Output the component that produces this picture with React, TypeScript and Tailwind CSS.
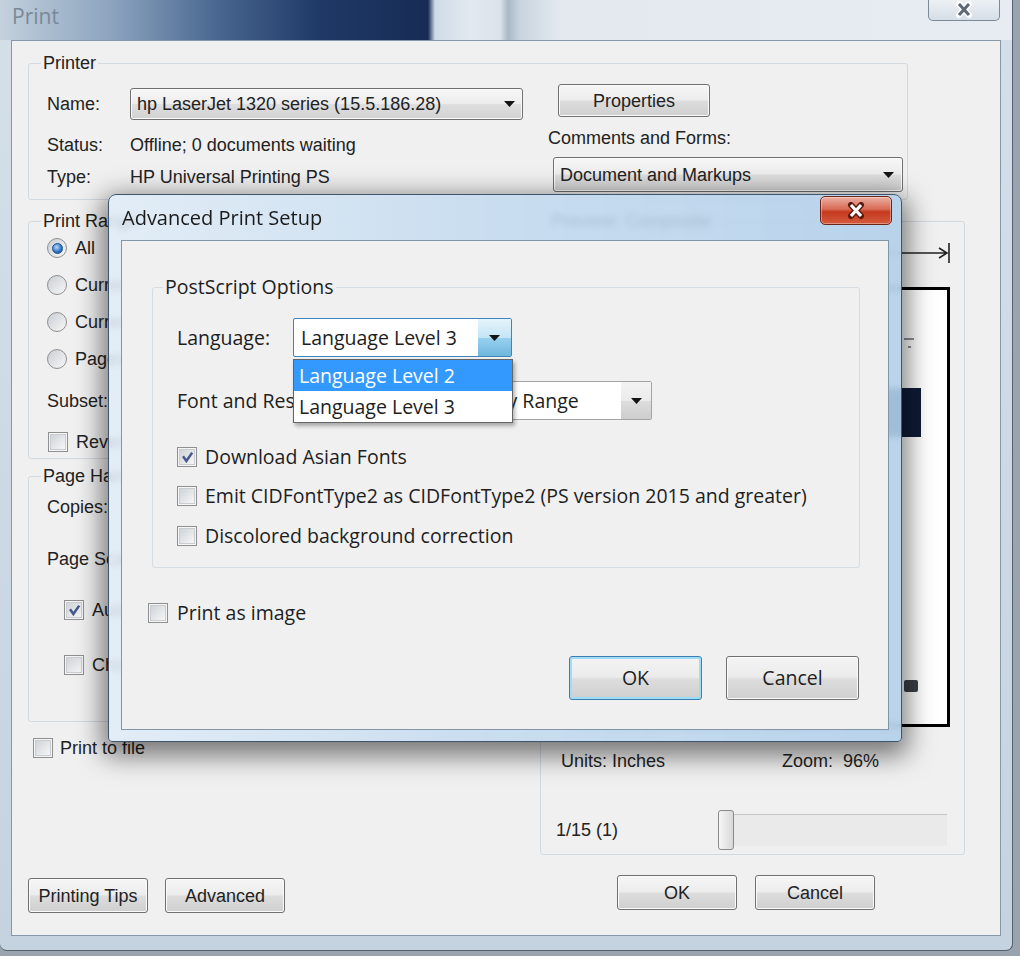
import React from "react";

const ui = "font-['Open_Sans','Noto_Sans',sans-serif]";

const btn =
  "flex items-center justify-center rounded-[3px] border border-[#707070] bg-[linear-gradient(#f6f6f6,#ececec_48%,#dddddd_52%,#cfcfcf)] shadow-[inset_0_0_0_1px_#fbfbfb]";

const combo =
  "flex items-center justify-between rounded-[3px] border border-[#707070] bg-[linear-gradient(#f7f7f7,#ededed_48%,#dedede_52%,#d2d2d2)] shadow-[inset_0_0_0_1px_#fbfbfb]";

const group = "rounded-[3px] border border-[#d2d9df]";

function Caret() {
  return (
    <svg width="11" height="6" viewBox="0 0 11 6" className="shrink-0">
      <path d="M0 0h11L5.5 6z" fill="#141414" />
    </svg>
  );
}

function Check({ on = false }: { on?: boolean }) {
  return (
    <span className="flex h-[20px] w-[20px] shrink-0 items-center justify-center border border-[#8f8f8f] bg-[#f5f5f5]">
      <span className="flex h-[16px] w-[16px] items-center justify-center border border-[#c9ccd1] bg-[linear-gradient(135deg,#cfd3d8,#f6f6f6)]">
        {on && (
          <svg width="13" height="12" viewBox="0 0 13 12">
            <path d="M2 5.2 5.4 10 11.2 1.6" fill="none" stroke="#45598e" strokeWidth="2.5" />
          </svg>
        )}
      </span>
    </span>
  );
}

function Radio({ on = false }: { on?: boolean }) {
  return (
    <span className="flex h-[20px] w-[20px] shrink-0 items-center justify-center rounded-full border border-[#8f8f8f] bg-[linear-gradient(135deg,#c9ced4,#f7f7f7)]">
      {on && (
        <span className="h-[11px] w-[11px] rounded-full border border-[#1b4f8c] bg-[radial-gradient(circle_at_40%_35%,#b4dcff,#2d72c0_60%,#1a4b8a)]" />
      )}
    </span>
  );
}

export default function App() {
  return (
    <div className="relative h-[956px] w-[1020px] overflow-hidden bg-[#9aa4ae] font-['Liberation_Sans',Arial,sans-serif] text-[18px] leading-[22px] text-[#222]">
      {/* Print window */}
      <div className="flex h-[951px] w-[1013px] flex-col rounded-b-[7px] border-r border-b border-[#56616d] bg-[linear-gradient(180deg,#d4dfe9,#c5d3e1)]">
        <div className="flex h-[40px] shrink-0 items-start justify-between bg-[linear-gradient(90deg,#c5d2de_0px,#aebfd1_40px,#8ea5c0_110px,#47658f_220px,#1f3966_320px,#172c55_428px,#cfdbe6_435px,#e2e9f0_470px,#dbe3eb_500px,#aab8c6_508px,#c9d4df_520px,#e3e9ef_560px,#e6ecf1_100%)]">
          <span className={`${ui} ml-[12px] mt-[3px] text-[21px] leading-[26px] text-[#7a8998]`}>Print</span>
          <div className="mr-[12px] flex h-[21px] w-[72px] items-center justify-center rounded-b-[5px] border border-t-0 border-[#7c8a98] bg-[linear-gradient(#edf1f5,#d5dee7)]">
            <svg width="24" height="18" viewBox="0 0 24 18">
              <path d="M7 3l10 11M17 3 7 14" stroke="#fff" strokeWidth="6" strokeLinecap="round" />
              <path d="M7 3l10 11M17 3 7 14" stroke="#5d6875" strokeWidth="3" />
            </svg>
          </div>
        </div>

        <div className="flex flex-1 px-[11px] pb-[14px]">
          <div className="flex flex-1 flex-col border border-[#8797a8] bg-[#f0f0f0]">
            {/* Printer */}
            <fieldset className={`${group} ml-[16px] mt-[11px] w-[880px] pb-[7px] pl-[12px]`}>
              <legend className="px-[2px]">Printer</legend>
              <div className="mt-[10px] flex">
                <div className="flex w-[482px] flex-col">
                  <div className="mt-[4px] flex h-[32px] items-center">
                    <span className="w-[89px] pl-[6px]">Name:</span>
                    <div className={`${combo} h-[32px] w-[393px] pl-[6px] pr-[7px]`}>
                      <span>hp LaserJet 1320 series (15.5.186.28)</span>
                      <Caret />
                    </div>
                  </div>
                  <div className="mt-[13px] flex h-[24px] items-center">
                    <span className="w-[89px] pl-[6px]">Status:</span>
                    <span>Offline; 0 documents waiting</span>
                  </div>
                  <div className="mt-[8px] flex h-[24px] items-center">
                    <span className="w-[89px] pl-[6px]">Type:</span>
                    <span>HP Universal Printing PS</span>
                  </div>
                </div>
                <div className="ml-[25px] flex flex-col">
                  <div className={`${btn} ml-[10px] h-[33px] w-[152px]`}>Properties</div>
                  <span className="mt-[9px] h-[24px] leading-[24px]">Comments and Forms:</span>
                  <div className={`${combo} ml-[5px] mt-[7px] h-[35px] w-[350px] pl-[6px] pr-[8px]`}>
                    <span>Document and Markups</span>
                    <Caret />
                  </div>
                </div>
              </div>
            </fieldset>

            <div className="mt-[10px] flex items-start">
              {/* left column */}
              <div className="ml-[16px] flex w-[505px] flex-col whitespace-nowrap">
                <fieldset className={`${group} pb-[3px] pl-[12px]`}>
                  <legend className="px-[2px]">Print Range</legend>
                  <div className="mt-[3px] flex h-[26px] items-center gap-[8px] pl-[6px]">
                    <Radio on />
                    <span>All</span>
                  </div>
                  <div className="mt-[11px] flex h-[26px] items-center gap-[8px] pl-[6px]">
                    <Radio />
                    <span>Current view</span>
                  </div>
                  <div className="mt-[11px] flex h-[26px] items-center gap-[8px] pl-[6px]">
                    <Radio />
                    <span>Current page</span>
                  </div>
                  <div className="mt-[11px] flex h-[26px] items-center gap-[8px] pl-[6px]">
                    <Radio />
                    <span>Pages</span>
                  </div>
                  <div className="mt-[16px] flex h-[26px] items-center pl-[6px]">
                    <span>Subset:</span>
                  </div>
                  <div className="mt-[15px] flex h-[26px] items-center gap-[8px] pl-[7px]">
                    <Check />
                    <span>Reverse pages</span>
                  </div>
                </fieldset>

                <fieldset className={`${group} mt-[6px] pb-[43px] pl-[12px]`}>
                  <legend className="px-[2px]">Page Handling</legend>
                  <div className="mt-[7px] flex h-[26px] items-center pl-[6px]">
                    <span>Copies:</span>
                  </div>
                  <div className="mt-[26px] flex h-[26px] items-center pl-[6px]">
                    <span>Page Scaling:</span>
                  </div>
                  <div className="mt-[25px] flex h-[26px] items-center gap-[8px] pl-[23px]">
                    <Check on />
                    <span>Auto-Rotate and Center</span>
                  </div>
                  <div className="mt-[29px] flex h-[26px] items-center gap-[8px] pl-[23px]">
                    <Check />
                    <span>Choose paper source by PDF page size</span>
                  </div>
                </fieldset>

                <div className="mt-[13px] flex h-[26px] items-center gap-[7px] pl-[5px]">
                  <Check />
                  <span>Print to file</span>
                </div>
              </div>

              {/* preview */}
              <fieldset className={`${group} ml-[7px] w-[425px] pb-[4px] pl-[8px]`}>
                <legend className="px-[2px]">Preview: Composite</legend>
                <div className="mt-[11px] flex h-[20px] justify-end pr-[14px]">
                  <svg width="380" height="20" viewBox="0 0 380 20">
                    <path d="M0 10H377M369 5l8 5-8 5M379 0v20" stroke="#222" strokeWidth="1.6" fill="none" />
                  </svg>
                </div>
                <div className="relative ml-[26px] mt-[24px] h-[440px] w-[375px] border-[3px] border-black bg-white">
                  <div className="absolute left-[300px] top-[98px] h-[49px] w-[43px] bg-[#0f1b36]" />
                  <div className="absolute left-[326px] top-[48px] h-[2px] w-[10px] bg-[#8a929c]" />
                  <div className="absolute left-[330px] top-[56px] h-[2px] w-[3px] bg-[#8a929c]" />
                  <div className="absolute left-[326px] top-[390px] h-[12px] w-[14px] rounded-[2px] bg-[#3a3f47]" />
                </div>
                <div className="mt-[22px] flex h-[24px] items-center pl-[12px]">
                  <span className="w-[221px]">Units: Inches</span>
                  <span>Zoom:&nbsp; 96%</span>
                </div>
                <div className="mt-[37px] flex h-[40px] items-center pl-[7px]">
                  <span className="w-[162px]">1/15 (1)</span>
                  <div className="relative h-[40px] w-[229px]">
                    <div className="absolute left-[2px] top-[4px] h-[32px] w-[227px] border-t border-[#c4c4c4] bg-[#eaeaea]" />
                    <div className="absolute left-0 top-0 h-[40px] w-[16px] rounded-[3px] border border-[#8a8a8a] bg-[linear-gradient(90deg,#f6f6f6,#d8d8d8)]" />
                  </div>
                </div>
              </fieldset>
            </div>

            <div className="mt-[20px] flex items-start">
              <div className={`${btn} ml-[16px] mt-[3px] h-[35px] w-[120px]`}>Printing Tips</div>
              <div className={`${btn} ml-[17px] mt-[3px] h-[35px] w-[120px]`}>Advanced</div>
              <div className={`${btn} ml-[332px] h-[35px] w-[120px]`}>OK</div>
              <div className={`${btn} ml-[18px] h-[35px] w-[120px]`}>Cancel</div>
            </div>
          </div>
        </div>
      </div>

      {/* Advanced Print Setup modal */}
      <div
        className={`${ui} absolute left-[108px] top-[194px] flex h-[548px] w-[794px] flex-col rounded-t-[8px] rounded-b-[4px] border border-[#40556b] bg-[linear-gradient(90deg,rgba(224,236,247,0.86),rgba(196,219,240,0.86)_45%,rgba(178,207,234,0.9))] text-[19.5px] leading-[24px] text-[#1e1e1e] shadow-[0_8px_26px_6px_rgba(0,0,0,0.5)] backdrop-blur-[3px]`}
      >
        <div className="flex h-[45px] shrink-0 items-start justify-between">
          <span className="ml-[13px] mt-[11px] text-[20px] leading-[24px] text-[#1b1b1b]">Advanced Print Setup</span>
          <div className="mr-[9px] mt-[1px] flex h-[29px] w-[72px] items-center justify-center rounded-[5px] border border-[#6b2519] bg-[linear-gradient(#eab0a2,#d86a55_45%,#c4391f_55%,#d65a3c)] shadow-[inset_0_0_0_1px_rgba(255,255,255,0.35)]">
            <svg width="22" height="18" viewBox="0 0 22 18">
              <path d="M6 3l10 11M16 3 6 14" stroke="#5a1a10" strokeWidth="6" strokeLinecap="round" />
              <path d="M6 3l10 11M16 3 6 14" stroke="#fff" strokeWidth="3.2" />
            </svg>
          </div>
        </div>

        <div className="mx-[12px] mb-[11px] flex flex-1 flex-col border border-[#8296aa] bg-[#f0f0f0]">
          <fieldset className="ml-[30px] mt-[34px] w-[708px] rounded-[3px] border border-[#d5dde3] pb-[19px] pl-[10px]">
            <legend className="px-[2px]">PostScript Options</legend>

            <div className="mt-[19px] flex h-[39px] items-center pl-[14px]">
              <span className="w-[116px]">Language:</span>
              <div className="relative h-[39px] w-[219px]">
                <div className="flex h-full items-stretch rounded-[2px] border border-[#3f84bd] bg-white">
                  <span className="flex flex-1 items-center pl-[7px]">Language Level 3</span>
                  <span className="flex w-[33px] items-center justify-center bg-[linear-gradient(#e5f4fc,#c4e5f6_50%,#98d1ef_51%,#6fb6dd)]">
                    <Caret />
                  </span>
                </div>
                <div className="absolute left-0 top-[41px] z-10 w-[220px] border border-[#646464] bg-white shadow-[2px_3px_4px_rgba(0,0,0,0.3)]">
                  <div className="h-[31px] bg-[#3399ff] pl-[5px] leading-[31px] text-white">Language Level 2</div>
                  <div className="h-[31px] pl-[5px] leading-[31px]">Language Level 3</div>
                </div>
              </div>
            </div>

            <div className="mt-[24px] flex h-[39px] items-center pl-[14px]">
              <span className="w-[260px] whitespace-nowrap">Font and Resource Policy:</span>
              <div className="flex h-[39px] w-[215px] items-stretch rounded-[2px] border border-[#a3a3a3] bg-white">
                <span className="flex flex-1 items-center whitespace-nowrap pl-[7px]">Send by Range</span>
                <span className="flex w-[30px] items-center justify-center bg-[linear-gradient(#f3f3f3,#ebebeb_50%,#dddddd_51%,#cdcdcd)]">
                  <Caret />
                </span>
              </div>
            </div>

            <div className="mt-[25px] flex h-[24px] items-center gap-[8px] pl-[14px]">
              <Check on />
              <span>Download Asian Fonts</span>
            </div>
            <div className="mt-[15px] flex h-[24px] items-center gap-[8px] pl-[14px]">
              <Check />
              <span>Emit CIDFontType2 as CIDFontType2 (PS version 2015 and greater)</span>
            </div>
            <div className="mt-[16px] flex h-[24px] items-center gap-[8px] pl-[14px]">
              <Check />
              <span>Discolored background correction</span>
            </div>
          </fieldset>

          <div className="ml-[26px] mt-[33px] flex h-[24px] items-center gap-[9px]">
            <Check />
            <span>Print as image</span>
          </div>

          <div className="mt-[31px] flex justify-end gap-[24px] pr-[29px]">
            <div className="flex h-[44px] w-[133px] items-center justify-center rounded-[3px] border border-[#3c7fb1] bg-[linear-gradient(#f4f4f4,#ebebeb_48%,#dddddd_52%,#cfcfcf)] shadow-[inset_0_0_0_2px_#9fdcf5]">
              OK
            </div>
            <div className="flex h-[44px] w-[133px] items-center justify-center rounded-[3px] border border-[#707070] bg-[linear-gradient(#f4f4f4,#ebebeb_48%,#dddddd_52%,#cfcfcf)] shadow-[inset_0_0_0_1px_#fbfbfb]">
              Cancel
            </div>
          </div>
        </div>
      </div>
    </div>
  );
}
